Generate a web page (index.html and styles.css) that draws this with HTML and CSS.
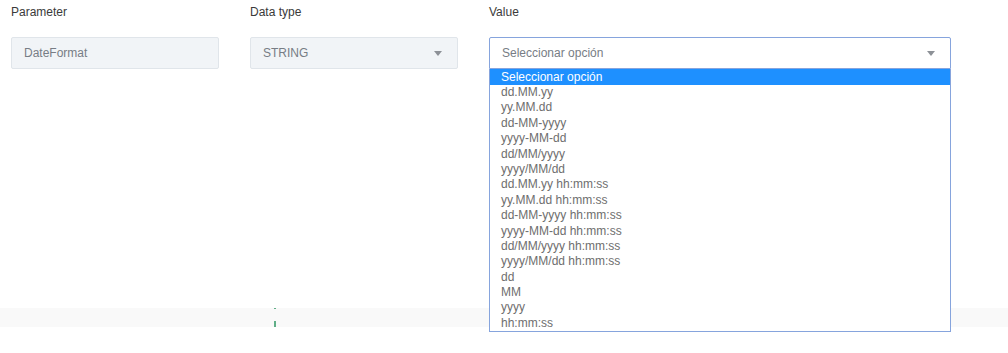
FILE: index.html
```html
<!DOCTYPE html>
<html lang="es">
<head>
	<meta charset="UTF-8">
	<title>Parameters</title>
	<link rel="stylesheet" href="styles.css">
</head>
<body>
	<div class="form-row">
		<div class="field">
			<label class="field-label">Parameter</label>
			<div class="input disabled">DateFormat</div>
		</div>
		<div class="field">
			<label class="field-label">Data type</label>
			<div class="input disabled select">STRING<span class="caret"></span></div>
		</div>
		<div class="field field-wide">
			<label class="field-label">Value</label>
			<div class="input select open">Seleccionar opción<span class="caret"></span></div>
			<ul class="options">
				<li class="active">Seleccionar opción</li>
				<li>dd.MM.yy</li>
				<li>yy.MM.dd</li>
				<li>dd-MM-yyyy</li>
				<li>yyyy-MM-dd</li>
				<li>dd/MM/yyyy</li>
				<li>yyyy/MM/dd</li>
				<li>dd.MM.yy hh:mm:ss</li>
				<li>yy.MM.dd hh:mm:ss</li>
				<li>dd-MM-yyyy hh:mm:ss</li>
				<li>yyyy-MM-dd hh:mm:ss</li>
				<li>dd/MM/yyyy hh:mm:ss</li>
				<li>yyyy/MM/dd hh:mm:ss</li>
				<li>dd</li>
				<li>MM</li>
				<li>yyyy</li>
				<li>hh:mm:ss</li>
			</ul>
		</div>
	</div>
	<div class="footer-band">
		<div class="marker"><span class="tick"></span><span class="bar"></span></div>
	</div>
</body>
</html>
```

FILE: styles.css
```css
*{
	margin:0;
	padding:0;
	box-sizing:border-box;
}
html,body{
	width:100%;
	height:100%;
}
body{
	font-family:"Liberation Sans", Arial, sans-serif;
	font-size:12px;
	color:#333;
	background:#fff;
	overflow:hidden;
}
.form-row{
	display:grid;
	grid-template-columns:208px 208px 462px;
	column-gap:31px;
	padding:0 11px;
}
.field{
	position:relative;
}
.field-label{
	display:block;
	height:24px;
	line-height:24px;
	margin-bottom:13px;
	color:#3a3a3a;
}
.input{
	position:relative;
	height:32px;
	line-height:30px;
	padding:0 12px;
	border:1px solid #e0e5ea;
	border-radius:2px;
	color:#777d85;
	background:#fff;
}
.input.disabled{
	background:#f1f4f7;
}
.input.open{
	border-color:#86a4dd;
	border-radius:2px 2px 0 0;
}
.caret{
	position:absolute;
	right:15px;
	top:13px;
	width:0;
	height:0;
	border-left:4px solid transparent;
	border-right:4px solid transparent;
	border-top:5px solid #8d9197;
}
.options{
	position:absolute;
	left:0;
	right:0;
	top:69px;
	list-style:none;
	border:1px solid #86a4dd;
	border-top:none;
	background:#fff;
	z-index:5;
}
.options li{
	height:15.4px;
	line-height:15.4px;
	padding-left:11px;
	color:#6e6e6e;
	white-space:nowrap;
}
.options li.active{
	height:16px;
	line-height:16px;
	background:#1e90ff;
	color:#fff;
}
.footer-band{
	margin-top:239px;
	height:19px;
	background:#f9f9f9;
	position:relative;
}
.marker{
	margin-left:274px;
	width:2px;
	height:19px;
	display:flex;
	flex-direction:column;
	justify-content:space-between;
}
.tick{
	height:1px;
	background:#5fae87;
}
.bar{
	height:6px;
	background:#5fae87;
}
```
